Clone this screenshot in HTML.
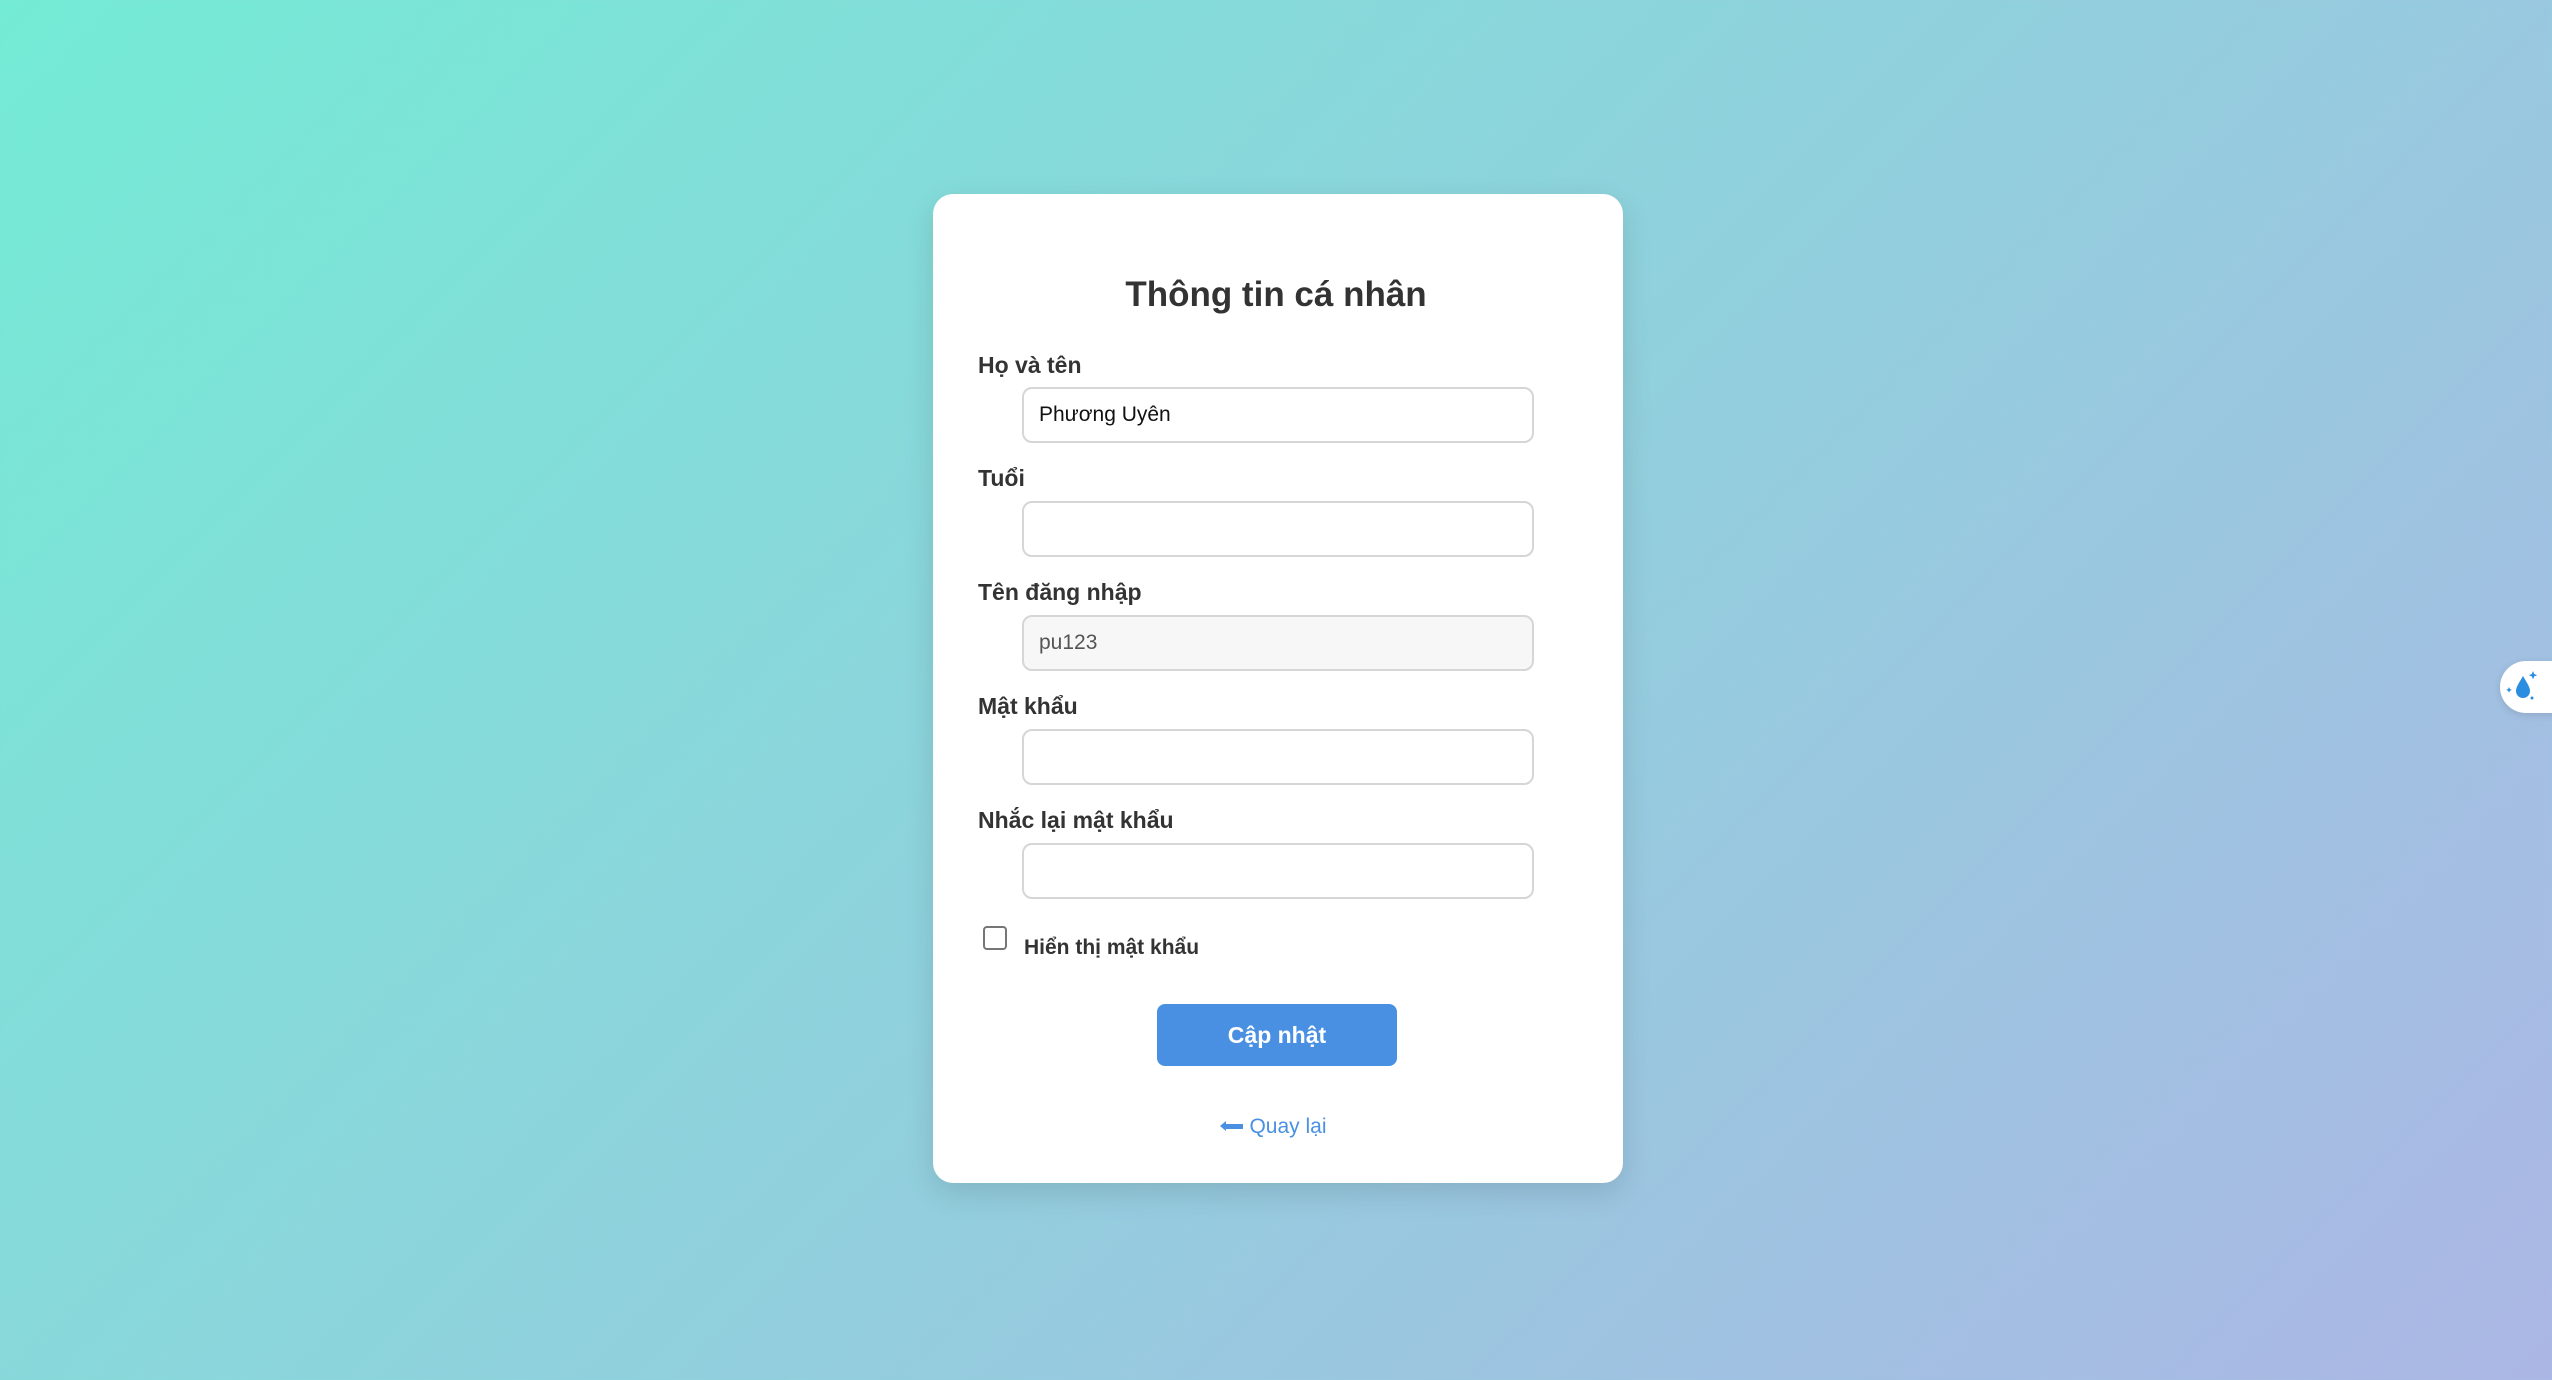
<!DOCTYPE html>
<html><head><meta charset="utf-8"><style>
*{box-sizing:border-box;margin:0;padding:0}
html,body{width:2552px;height:1380px;overflow:hidden}
body{background:linear-gradient(135deg,#74ebd5 0%,#acb6e5 100%);font-family:"Liberation Sans",Arial,sans-serif;position:relative}
.card{position:absolute;left:933px;top:194px;width:690px;height:989px;background:#fff;border-radius:20px;box-shadow:0 10px 30px rgba(0,0,0,0.12)}
h1{position:absolute;left:0;right:0;top:272px;text-align:center;font-size:35px;font-weight:bold;color:#333;line-height:46px}
.lbl{position:absolute;left:978px;font-size:23px;font-weight:bold;color:#333;line-height:30px}
.inp{position:absolute;left:1022px;width:512px;height:56px;border:2px solid #d6d6d6;border-radius:10px;background:#fff;font-size:21px;color:#111;padding-left:15px;line-height:52px}
.inp.dis{background:#f7f7f7;color:#555}
.cb{position:absolute;left:983px;top:926px;width:24px;height:24px;border:2px solid #767676;border-radius:4px;background:#fff}
.cbl{position:absolute;left:1024px;top:934px;font-size:21px;font-weight:bold;color:#333;line-height:28px}
.btn{position:absolute;left:1157px;top:1004px;width:240px;height:62px;background:#4a90e2;border-radius:8px;color:#fff;font-size:23px;font-weight:bold;text-align:center;line-height:62px}
.back{position:absolute;left:0;width:2552px;top:1113px;text-align:center;font-size:21px;color:#4a90e2;line-height:28px}
.arr{display:inline-block;width:18px;height:5px;background:#4a90e2;vertical-align:middle;margin-right:6px;position:relative;top:-1px}
.arr:before{content:"";position:absolute;left:-5px;top:-3px;border-right:6px solid #4a90e2;border-top:5.5px solid transparent;border-bottom:5.5px solid transparent}
.widget{position:absolute;left:2500px;top:661px;width:60px;height:52px;background:#fff;border-radius:26px 0 0 26px;box-shadow:0 2px 8px rgba(0,0,0,0.12)}
</style></head><body>
<div class="card"></div>
<h1>Thông tin cá nhân</h1>
<div class="lbl" style="top:350px">Họ và tên</div>
<div class="inp" style="top:387px">Phương Uyên</div>
<div class="lbl" style="top:463px">Tuổi</div>
<div class="inp" style="top:501px"></div>
<div class="lbl" style="top:577px">Tên đăng nhập</div>
<div class="inp dis" style="top:615px">pu123</div>
<div class="lbl" style="top:691px">Mật khẩu</div>
<div class="inp" style="top:729px"></div>
<div class="lbl" style="top:805px">Nhắc lại mật khẩu</div>
<div class="inp" style="top:843px"></div>
<div class="cb"></div>
<div class="cbl">Hiển thị mật khẩu</div>
<div class="btn">Cập nhật</div>
<div class="back"><span class="arr"></span>Quay lại</div>
<div class="widget"><svg width="52" height="52" viewBox="0 0 52 52" style="position:absolute;left:0;top:0">
<path d="M23 15 C19 22 16 26 16 30 a7 7 0 0 0 14 0 c0-4-3-8-7-15z" fill="#2b8de0"/>
<path d="M33 10 l1.2 3 3 1.2 -3 1.2 -1.2 3 -1.2 -3 -3 -1.2 3 -1.2z" fill="#2b8de0"/>
<path d="M9 26 l0.9 2 2 0.9 -2 0.9 -0.9 2 -0.9 -2 -2 -0.9 2 -0.9z" fill="#2b8de0"/>
<circle cx="32" cy="37" r="1.5" fill="#2b8de0"/>
</svg></div>
</body></html>
